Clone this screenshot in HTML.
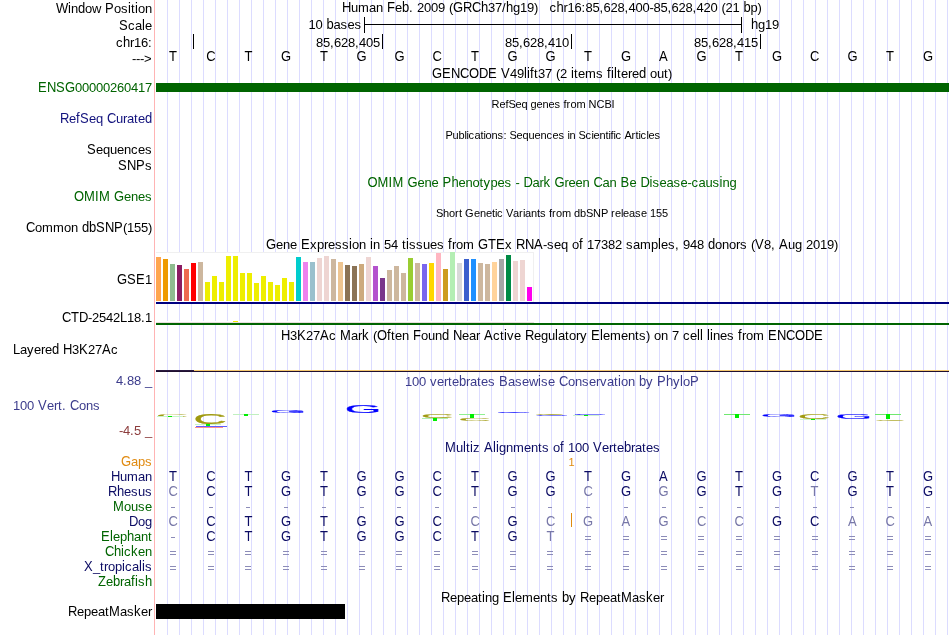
<!DOCTYPE html>
<html><head><meta charset="utf-8"><style>
html,body{margin:0;padding:0;background:#fff;}
body{width:950px;height:635px;overflow:hidden;}
svg{display:block;will-change:transform;font-family:"Liberation Sans",sans-serif;}
rect{shape-rendering:crispEdges;}
</style></head><body>
<svg width="950" height="635" viewBox="0 0 950 635">
<rect x="167" y="0" width="1" height="635" fill="#dcdcff"/>
<rect x="179" y="0" width="1" height="635" fill="#dcdcff"/>
<rect x="191" y="0" width="1" height="635" fill="#dcdcff"/>
<rect x="203" y="0" width="1" height="635" fill="#dcdcff"/>
<rect x="215" y="0" width="1" height="635" fill="#dcdcff"/>
<rect x="227" y="0" width="1" height="635" fill="#dcdcff"/>
<rect x="239" y="0" width="1" height="635" fill="#dcdcff"/>
<rect x="251" y="0" width="1" height="635" fill="#dcdcff"/>
<rect x="263" y="0" width="1" height="635" fill="#dcdcff"/>
<rect x="275" y="0" width="1" height="635" fill="#dcdcff"/>
<rect x="287" y="0" width="1" height="635" fill="#dcdcff"/>
<rect x="299" y="0" width="1" height="635" fill="#dcdcff"/>
<rect x="311" y="0" width="1" height="635" fill="#dcdcff"/>
<rect x="323" y="0" width="1" height="635" fill="#dcdcff"/>
<rect x="335" y="0" width="1" height="635" fill="#dcdcff"/>
<rect x="347" y="0" width="1" height="635" fill="#dcdcff"/>
<rect x="359" y="0" width="1" height="635" fill="#dcdcff"/>
<rect x="371" y="0" width="1" height="635" fill="#dcdcff"/>
<rect x="383" y="0" width="1" height="635" fill="#dcdcff"/>
<rect x="395" y="0" width="1" height="635" fill="#dcdcff"/>
<rect x="407" y="0" width="1" height="635" fill="#dcdcff"/>
<rect x="419" y="0" width="1" height="635" fill="#dcdcff"/>
<rect x="431" y="0" width="1" height="635" fill="#dcdcff"/>
<rect x="443" y="0" width="1" height="635" fill="#dcdcff"/>
<rect x="455" y="0" width="1" height="635" fill="#dcdcff"/>
<rect x="467" y="0" width="1" height="635" fill="#dcdcff"/>
<rect x="479" y="0" width="1" height="635" fill="#dcdcff"/>
<rect x="491" y="0" width="1" height="635" fill="#dcdcff"/>
<rect x="503" y="0" width="1" height="635" fill="#dcdcff"/>
<rect x="515" y="0" width="1" height="635" fill="#dcdcff"/>
<rect x="527" y="0" width="1" height="635" fill="#dcdcff"/>
<rect x="539" y="0" width="1" height="635" fill="#dcdcff"/>
<rect x="551" y="0" width="1" height="635" fill="#dcdcff"/>
<rect x="563" y="0" width="1" height="635" fill="#dcdcff"/>
<rect x="575" y="0" width="1" height="635" fill="#dcdcff"/>
<rect x="587" y="0" width="1" height="635" fill="#dcdcff"/>
<rect x="599" y="0" width="1" height="635" fill="#dcdcff"/>
<rect x="611" y="0" width="1" height="635" fill="#dcdcff"/>
<rect x="623" y="0" width="1" height="635" fill="#dcdcff"/>
<rect x="635" y="0" width="1" height="635" fill="#dcdcff"/>
<rect x="647" y="0" width="1" height="635" fill="#dcdcff"/>
<rect x="659" y="0" width="1" height="635" fill="#dcdcff"/>
<rect x="671" y="0" width="1" height="635" fill="#dcdcff"/>
<rect x="683" y="0" width="1" height="635" fill="#dcdcff"/>
<rect x="695" y="0" width="1" height="635" fill="#dcdcff"/>
<rect x="707" y="0" width="1" height="635" fill="#dcdcff"/>
<rect x="719" y="0" width="1" height="635" fill="#dcdcff"/>
<rect x="731" y="0" width="1" height="635" fill="#dcdcff"/>
<rect x="743" y="0" width="1" height="635" fill="#dcdcff"/>
<rect x="755" y="0" width="1" height="635" fill="#dcdcff"/>
<rect x="767" y="0" width="1" height="635" fill="#dcdcff"/>
<rect x="779" y="0" width="1" height="635" fill="#dcdcff"/>
<rect x="791" y="0" width="1" height="635" fill="#dcdcff"/>
<rect x="803" y="0" width="1" height="635" fill="#dcdcff"/>
<rect x="815" y="0" width="1" height="635" fill="#dcdcff"/>
<rect x="827" y="0" width="1" height="635" fill="#dcdcff"/>
<rect x="839" y="0" width="1" height="635" fill="#dcdcff"/>
<rect x="851" y="0" width="1" height="635" fill="#dcdcff"/>
<rect x="863" y="0" width="1" height="635" fill="#dcdcff"/>
<rect x="875" y="0" width="1" height="635" fill="#dcdcff"/>
<rect x="887" y="0" width="1" height="635" fill="#dcdcff"/>
<rect x="899" y="0" width="1" height="635" fill="#dcdcff"/>
<rect x="911" y="0" width="1" height="635" fill="#dcdcff"/>
<rect x="923" y="0" width="1" height="635" fill="#dcdcff"/>
<rect x="935" y="0" width="1" height="635" fill="#dcdcff"/>
<rect x="947" y="0" width="1" height="635" fill="#dcdcff"/>
<rect x="154" y="0" width="1" height="635" fill="#ffb4b4"/>
<text transform="translate(0,13) scale(1,1.09)" x="56" y="0" font-size="13" fill="#000">W</text>
<text transform="translate(0,13) scale(1,1.07)" x="68" y="0" font-size="13" fill="#000">i</text>
<text transform="translate(0,13) scale(1,1.03)" x="71" y="0" font-size="13" fill="#000">n</text>
<text transform="translate(0,13) scale(1,1.07)" x="78" y="0" font-size="13" fill="#000">d</text>
<text transform="translate(0,13) scale(1,1.03)" x="85 92" y="0" font-size="13" fill="#000">ow</text>
<text transform="translate(0,13) scale(1,1.09)" x="105" y="0" font-size="13" fill="#000">P</text>
<text transform="translate(0,13) scale(1,1.03)" x="114 121" y="0" font-size="13" fill="#000">os</text>
<text transform="translate(0,13) scale(1,1.07)" x="128" y="0" font-size="13" fill="#000">i</text>
<text transform="translate(0,13) scale(1,1.03)" x="131" y="0" font-size="13" fill="#000">t</text>
<text transform="translate(0,13) scale(1,1.07)" x="135" y="0" font-size="13" fill="#000">i</text>
<text transform="translate(0,13) scale(1,1.03)" x="138 145" y="0" font-size="13" fill="#000">on</text>
<text transform="translate(0,30) scale(1,1.09)" x="119" y="0" font-size="13" fill="#000">S</text>
<text transform="translate(0,30) scale(1,1.03)" x="128 135" y="0" font-size="13" fill="#000">ca</text>
<text transform="translate(0,30) scale(1,1.07)" x="142" y="0" font-size="13" fill="#000">l</text>
<text transform="translate(0,30) scale(1,1.03)" x="145" y="0" font-size="13" fill="#000">e</text>
<text transform="translate(0,47) scale(1,1.03)" x="116" y="0" font-size="13" fill="#000">c</text>
<text transform="translate(0,47) scale(1,1.07)" x="123" y="0" font-size="13" fill="#000">h</text>
<text transform="translate(0,47) scale(1,1.03)" x="130 134 141 148" y="0" font-size="13" fill="#000">r16:</text>
<text transform="translate(0,63) scale(1,1.03)" x="132 136 140 144" y="0" font-size="13" fill="#000">---&gt;</text>
<text transform="translate(0,92) scale(1,1.09)" x="38 47 56 65" y="0" font-size="13" fill="#006400">ENSG</text>
<text transform="translate(0,92) scale(1,1.03)" x="75 82 89 96 103 110 117 124 131 138 145" y="0" font-size="13" fill="#006400">00000260417</text>
<text transform="translate(0,123) scale(1,1.09)" x="60" y="0" font-size="13" fill="#12127d">R</text>
<text transform="translate(0,123) scale(1,1.03)" x="69" y="0" font-size="13" fill="#12127d">e</text>
<text transform="translate(0,123) scale(1,1.07)" x="76" y="0" font-size="13" fill="#12127d">f</text>
<text transform="translate(0,123) scale(1,1.09)" x="80" y="0" font-size="13" fill="#12127d">S</text>
<text transform="translate(0,123) scale(1,1.03)" x="89 96" y="0" font-size="13" fill="#12127d">eq</text>
<text transform="translate(0,123) scale(1,1.09)" x="107" y="0" font-size="13" fill="#12127d">C</text>
<text transform="translate(0,123) scale(1,1.03)" x="116 123 127 134 138" y="0" font-size="13" fill="#12127d">urate</text>
<text transform="translate(0,123) scale(1,1.07)" x="145" y="0" font-size="13" fill="#12127d">d</text>
<text transform="translate(0,154) scale(1,1.09)" x="87" y="0" font-size="13" fill="#000">S</text>
<text transform="translate(0,154) scale(1,1.03)" x="96 103 110 117 124 131 138 145" y="0" font-size="13" fill="#000">equences</text>
<text transform="translate(0,170) scale(1,1.09)" x="118 127 136" y="0" font-size="13" fill="#000">SNP</text>
<text transform="translate(0,170) scale(1,1.03)" x="145" y="0" font-size="13" fill="#000">s</text>
<text transform="translate(0,201) scale(1,1.09)" x="74 84 95 99 114" y="0" font-size="13" fill="#006400">OMIMG</text>
<text transform="translate(0,201) scale(1,1.03)" x="124 131 138 145" y="0" font-size="13" fill="#006400">enes</text>
<text transform="translate(0,232) scale(1,1.09)" x="26" y="0" font-size="13" fill="#000">C</text>
<text transform="translate(0,232) scale(1,1.03)" x="35 42 53 64 71" y="0" font-size="13" fill="#000">ommon</text>
<text transform="translate(0,232) scale(1,1.07)" x="82 89" y="0" font-size="13" fill="#000">db</text>
<text transform="translate(0,232) scale(1,1.09)" x="96 105 114" y="0" font-size="13" fill="#000">SNP</text>
<text transform="translate(0,232) scale(1,1.03)" x="123 127 134 141 148" y="0" font-size="13" fill="#000">(155)</text>
<text transform="translate(0,284) scale(1,1.09)" x="117 127 136" y="0" font-size="13" fill="#000">GSE</text>
<text transform="translate(0,284) scale(1,1.03)" x="145" y="0" font-size="13" fill="#000">1</text>
<text transform="translate(0,322) scale(1,1.09)" x="62 71 79" y="0" font-size="13" fill="#000">CTD</text>
<text transform="translate(0,322) scale(1,1.03)" x="88 92 99 106 113" y="0" font-size="13" fill="#000">-2542</text>
<text transform="translate(0,322) scale(1,1.09)" x="120" y="0" font-size="13" fill="#000">L</text>
<text transform="translate(0,322) scale(1,1.03)" x="127 134 141 145" y="0" font-size="13" fill="#000">18.1</text>
<text transform="translate(0,353.5) scale(1,1.09)" x="13" y="0" font-size="13" fill="#000">L</text>
<text transform="translate(0,353.5) scale(1,1.03)" x="20 27 34 41 45" y="0" font-size="13" fill="#000">ayere</text>
<text transform="translate(0,353.5) scale(1,1.07)" x="52" y="0" font-size="13" fill="#000">d</text>
<text transform="translate(0,353.5) scale(1,1.09)" x="63" y="0" font-size="13" fill="#000">H</text>
<text transform="translate(0,353.5) scale(1,1.03)" x="72" y="0" font-size="13" fill="#000">3</text>
<text transform="translate(0,353.5) scale(1,1.09)" x="79" y="0" font-size="13" fill="#000">K</text>
<text transform="translate(0,353.5) scale(1,1.03)" x="88 95" y="0" font-size="13" fill="#000">27</text>
<text transform="translate(0,353.5) scale(1,1.09)" x="102" y="0" font-size="13" fill="#000">A</text>
<text transform="translate(0,353.5) scale(1,1.03)" x="111" y="0" font-size="13" fill="#000">c</text>
<text transform="translate(0,385) scale(1,1.03)" x="116 123 127 134 145" y="0" font-size="13" fill="#3c3c8c">4.88_</text>
<text transform="translate(0,410) scale(1,1.03)" x="13 20 27" y="0" font-size="13" fill="#3c3c8c">100</text>
<text transform="translate(0,410) scale(1,1.09)" x="38" y="0" font-size="13" fill="#3c3c8c">V</text>
<text transform="translate(0,410) scale(1,1.03)" x="47 54 58 62" y="0" font-size="13" fill="#3c3c8c">ert.</text>
<text transform="translate(0,410) scale(1,1.09)" x="70" y="0" font-size="13" fill="#3c3c8c">C</text>
<text transform="translate(0,410) scale(1,1.03)" x="79 86 93" y="0" font-size="13" fill="#3c3c8c">ons</text>
<text transform="translate(0,435) scale(1,1.03)" x="119 123 130 134 145" y="0" font-size="13" fill="#8c3c3c">-4.5_</text>
<text transform="translate(0,466) scale(1,1.09)" x="121" y="0" font-size="13" fill="#e08a10">G</text>
<text transform="translate(0,466) scale(1,1.03)" x="131 138 145" y="0" font-size="13" fill="#e08a10">aps</text>
<text transform="translate(0,481) scale(1,1.09)" x="111" y="0" font-size="13" fill="#0c0c64">H</text>
<text transform="translate(0,481) scale(1,1.03)" x="120 127 138 145" y="0" font-size="13" fill="#0c0c64">uman</text>
<text transform="translate(0,496) scale(1,1.09)" x="108" y="0" font-size="13" fill="#0c0c64">R</text>
<text transform="translate(0,496) scale(1,1.07)" x="117" y="0" font-size="13" fill="#0c0c64">h</text>
<text transform="translate(0,496) scale(1,1.03)" x="124 131 138 145" y="0" font-size="13" fill="#0c0c64">esus</text>
<text transform="translate(0,511) scale(1,1.09)" x="113" y="0" font-size="13" fill="#006400">M</text>
<text transform="translate(0,511) scale(1,1.03)" x="124 131 138 145" y="0" font-size="13" fill="#006400">ouse</text>
<text transform="translate(0,526) scale(1,1.09)" x="129" y="0" font-size="13" fill="#0c0c64">D</text>
<text transform="translate(0,526) scale(1,1.03)" x="138 145" y="0" font-size="13" fill="#0c0c64">og</text>
<text transform="translate(0,541) scale(1,1.09)" x="101" y="0" font-size="13" fill="#006400">E</text>
<text transform="translate(0,541) scale(1,1.07)" x="110" y="0" font-size="13" fill="#006400">l</text>
<text transform="translate(0,541) scale(1,1.03)" x="113 120" y="0" font-size="13" fill="#006400">ep</text>
<text transform="translate(0,541) scale(1,1.07)" x="127" y="0" font-size="13" fill="#006400">h</text>
<text transform="translate(0,541) scale(1,1.03)" x="134 141 148" y="0" font-size="13" fill="#006400">ant</text>
<text transform="translate(0,556) scale(1,1.09)" x="105" y="0" font-size="13" fill="#006400">C</text>
<text transform="translate(0,556) scale(1,1.07)" x="114 121" y="0" font-size="13" fill="#006400">hi</text>
<text transform="translate(0,556) scale(1,1.03)" x="124" y="0" font-size="13" fill="#006400">c</text>
<text transform="translate(0,556) scale(1,1.07)" x="131" y="0" font-size="13" fill="#006400">k</text>
<text transform="translate(0,556) scale(1,1.03)" x="138 145" y="0" font-size="13" fill="#006400">en</text>
<text transform="translate(0,571) scale(1,1.09)" x="84" y="0" font-size="13" fill="#0c0c64">X</text>
<text transform="translate(0,571) scale(1,1.03)" x="93 100 104 108 115" y="0" font-size="13" fill="#0c0c64">_trop</text>
<text transform="translate(0,571) scale(1,1.07)" x="122" y="0" font-size="13" fill="#0c0c64">i</text>
<text transform="translate(0,571) scale(1,1.03)" x="125 132" y="0" font-size="13" fill="#0c0c64">ca</text>
<text transform="translate(0,571) scale(1,1.07)" x="139 142" y="0" font-size="13" fill="#0c0c64">li</text>
<text transform="translate(0,571) scale(1,1.03)" x="145" y="0" font-size="13" fill="#0c0c64">s</text>
<text transform="translate(0,586) scale(1,1.09)" x="98" y="0" font-size="13" fill="#006400">Z</text>
<text transform="translate(0,586) scale(1,1.03)" x="106" y="0" font-size="13" fill="#006400">e</text>
<text transform="translate(0,586) scale(1,1.07)" x="113" y="0" font-size="13" fill="#006400">b</text>
<text transform="translate(0,586) scale(1,1.03)" x="120 124" y="0" font-size="13" fill="#006400">ra</text>
<text transform="translate(0,586) scale(1,1.07)" x="131 135" y="0" font-size="13" fill="#006400">fi</text>
<text transform="translate(0,586) scale(1,1.03)" x="138" y="0" font-size="13" fill="#006400">s</text>
<text transform="translate(0,586) scale(1,1.07)" x="145" y="0" font-size="13" fill="#006400">h</text>
<text transform="translate(0,616) scale(1,1.09)" x="68" y="0" font-size="13" fill="#000">R</text>
<text transform="translate(0,616) scale(1,1.03)" x="77 84 91 98 105" y="0" font-size="13" fill="#000">epeat</text>
<text transform="translate(0,616) scale(1,1.09)" x="109" y="0" font-size="13" fill="#000">M</text>
<text transform="translate(0,616) scale(1,1.03)" x="120 127" y="0" font-size="13" fill="#000">as</text>
<text transform="translate(0,616) scale(1,1.07)" x="134" y="0" font-size="13" fill="#000">k</text>
<text transform="translate(0,616) scale(1,1.03)" x="141 148" y="0" font-size="13" fill="#000">er</text>
<text transform="translate(0,12) scale(1,1.09)" x="342" y="0" font-size="13" fill="#000">H</text>
<text transform="translate(0,12) scale(1,1.03)" x="351 358 369 376" y="0" font-size="13" fill="#000">uman</text>
<text transform="translate(0,12) scale(1,1.09)" x="387" y="0" font-size="13" fill="#000">F</text>
<text transform="translate(0,12) scale(1,1.03)" x="395" y="0" font-size="13" fill="#000">e</text>
<text transform="translate(0,12) scale(1,1.07)" x="402" y="0" font-size="13" fill="#000">b</text>
<text transform="translate(0,12) scale(1,1.03)" x="409 417 424 431 438 449" y="0" font-size="13" fill="#000">.2009(</text>
<text transform="translate(0,12) scale(1,1.09)" x="453 463 472" y="0" font-size="13" fill="#000">GRC</text>
<text transform="translate(0,12) scale(1,1.07)" x="481" y="0" font-size="13" fill="#000">h</text>
<text transform="translate(0,12) scale(1,1.03)" x="488 495 502" y="0" font-size="13" fill="#000">37/</text>
<text transform="translate(0,12) scale(1,1.07)" x="506" y="0" font-size="13" fill="#000">h</text>
<text transform="translate(0,12) scale(1,1.03)" x="513 520 527 534" y="0" font-size="13" fill="#000">g19)</text>
<text transform="translate(0,12) scale(1,1.03)" x="549.5" y="0" font-size="13" fill="#000">c</text>
<text transform="translate(0,12) scale(1,1.07)" x="556.5" y="0" font-size="13" fill="#000">h</text>
<text transform="translate(0,12) scale(1,1.03)" x="563.5 567.5 574.5 581.5 585.5 592.5 599.5 603.5 610.5 617.5 624.5 628.5 635.5 642.5 649.5 653.5 660.5 667.5 671.5 678.5 685.5 692.5 696.5 703.5 710.5 721.5 725.5 732.5" y="0" font-size="13" fill="#000">r16:85,628,400-85,628,420(21</text>
<text transform="translate(0,12) scale(1,1.07)" x="743.5" y="0" font-size="13" fill="#000">b</text>
<text transform="translate(0,12) scale(1,1.03)" x="750.5 757.5" y="0" font-size="13" fill="#000">p)</text>
<text transform="translate(0,29) scale(1,1.03)" x="308.5 315.5" y="0" font-size="13" fill="#000">10</text>
<text transform="translate(0,29) scale(1,1.07)" x="326.5" y="0" font-size="13" fill="#000">b</text>
<text transform="translate(0,29) scale(1,1.03)" x="333.5 340.5 347.5 354.5" y="0" font-size="13" fill="#000">ases</text>
<rect x="364" y="17" width="1" height="16" fill="#000"/>
<rect x="741" y="17" width="1" height="16" fill="#000"/>
<rect x="364" y="24" width="378" height="1" fill="#000"/>
<text transform="translate(0,29) scale(1,1.07)" x="751" y="0" font-size="13" fill="#000">h</text>
<text transform="translate(0,29) scale(1,1.03)" x="758 765 772" y="0" font-size="13" fill="#000">g19</text>
<rect x="382" y="34" width="1" height="15" fill="#000"/>
<text transform="translate(0,47) scale(1,1.03)" x="316 323 330 334 341 348 355 359 366 373" y="0" font-size="13" fill="#000">85,628,405</text>
<rect x="571" y="34" width="1" height="15" fill="#000"/>
<text transform="translate(0,47) scale(1,1.03)" x="505 512 519 523 530 537 544 548 555 562" y="0" font-size="13" fill="#000">85,628,410</text>
<rect x="760" y="34" width="1" height="15" fill="#000"/>
<text transform="translate(0,47) scale(1,1.03)" x="694 701 708 712 719 726 733 737 744 751" y="0" font-size="13" fill="#000">85,628,415</text>
<rect x="193" y="34" width="1" height="15" fill="#000"/>
<text transform="translate(0,61) scale(1,1.09)" x="168.9" y="0" font-size="13" fill="#000">T</text>
<text transform="translate(0,61) scale(1,1.09)" x="206.2" y="0" font-size="13" fill="#000">C</text>
<text transform="translate(0,61) scale(1,1.09)" x="244.4" y="0" font-size="13" fill="#000">T</text>
<text transform="translate(0,61) scale(1,1.09)" x="281.1" y="0" font-size="13" fill="#000">G</text>
<text transform="translate(0,61) scale(1,1.09)" x="319.9" y="0" font-size="13" fill="#000">T</text>
<text transform="translate(0,61) scale(1,1.09)" x="356.6" y="0" font-size="13" fill="#000">G</text>
<text transform="translate(0,61) scale(1,1.09)" x="394.4" y="0" font-size="13" fill="#000">G</text>
<text transform="translate(0,61) scale(1,1.09)" x="432.6" y="0" font-size="13" fill="#000">C</text>
<text transform="translate(0,61) scale(1,1.09)" x="470.9" y="0" font-size="13" fill="#000">T</text>
<text transform="translate(0,61) scale(1,1.09)" x="507.6" y="0" font-size="13" fill="#000">G</text>
<text transform="translate(0,61) scale(1,1.09)" x="545.4" y="0" font-size="13" fill="#000">G</text>
<text transform="translate(0,61) scale(1,1.09)" x="584.1" y="0" font-size="13" fill="#000">T</text>
<text transform="translate(0,61) scale(1,1.09)" x="620.9" y="0" font-size="13" fill="#000">G</text>
<text transform="translate(0,61) scale(1,1.09)" x="659.1" y="0" font-size="13" fill="#000">A</text>
<text transform="translate(0,61) scale(1,1.09)" x="696.4" y="0" font-size="13" fill="#000">G</text>
<text transform="translate(0,61) scale(1,1.09)" x="735.1" y="0" font-size="13" fill="#000">T</text>
<text transform="translate(0,61) scale(1,1.09)" x="771.9" y="0" font-size="13" fill="#000">G</text>
<text transform="translate(0,61) scale(1,1.09)" x="810.1" y="0" font-size="13" fill="#000">C</text>
<text transform="translate(0,61) scale(1,1.09)" x="847.4" y="0" font-size="13" fill="#000">G</text>
<text transform="translate(0,61) scale(1,1.09)" x="886.1" y="0" font-size="13" fill="#000">T</text>
<text transform="translate(0,61) scale(1,1.09)" x="922.9" y="0" font-size="13" fill="#000">G</text>
<text transform="translate(0,78) scale(1,1.09)" x="432 442 451 460 469 479 488 501" y="0" font-size="13" fill="#000">GENCODEV</text>
<text transform="translate(0,78) scale(1,1.03)" x="510 517" y="0" font-size="13" fill="#000">49</text>
<text transform="translate(0,78) scale(1,1.07)" x="524 527 530" y="0" font-size="13" fill="#000">lif</text>
<text transform="translate(0,78) scale(1,1.03)" x="534 538 545 556 560" y="0" font-size="13" fill="#000">t37(2</text>
<text transform="translate(0,78) scale(1,1.07)" x="571" y="0" font-size="13" fill="#000">i</text>
<text transform="translate(0,78) scale(1,1.03)" x="574 578 585 596" y="0" font-size="13" fill="#000">tems</text>
<text transform="translate(0,78) scale(1,1.07)" x="607 611 614" y="0" font-size="13" fill="#000">fil</text>
<text transform="translate(0,78) scale(1,1.03)" x="617 621 628 632" y="0" font-size="13" fill="#000">tere</text>
<text transform="translate(0,78) scale(1,1.07)" x="639" y="0" font-size="13" fill="#000">d</text>
<text transform="translate(0,78) scale(1,1.03)" x="650 657 664 668" y="0" font-size="13" fill="#000">out)</text>
<rect x="156" y="83" width="793" height="9" fill="#006400"/>
<text transform="translate(0,108) scale(1,1.0)" x="491.5 499.5 505.5 508.5 515.5 521.5 530.5 536.5 542.5 548.5 554.5 563.5 566.5 570.5 576.5 588.5 596.5 604.5 611.5" y="0" font-size="11" fill="#000">RefSeqgenesfromNCBI</text>
<text transform="translate(0,139) scale(1,1.0)" x="445.5 452.5 458.5 464.5 466.5 468.5 474.5 480.5 483.5 485.5 491.5 497.5 503.5 509.5 516.5 522.5 528.5 534.5 540.5 546.5 552.5 558.5 567.5 569.5 578.5 585.5 591.5 593.5 599.5 605.5 608.5 610.5 613.5 615.5 624.5 631.5 635.5 638.5 640.5 646.5 648.5 654.5" y="0" font-size="11" fill="#000">Publications:SequencesinScientificArticles</text>
<text transform="translate(0,187) scale(1,1.09)" x="367.5 377.5 388.5 392.5 407.5" y="0" font-size="13" fill="#006400">OMIMG</text>
<text transform="translate(0,187) scale(1,1.03)" x="417.5 424.5 431.5" y="0" font-size="13" fill="#006400">ene</text>
<text transform="translate(0,187) scale(1,1.09)" x="442.5" y="0" font-size="13" fill="#006400">P</text>
<text transform="translate(0,187) scale(1,1.07)" x="451.5" y="0" font-size="13" fill="#006400">h</text>
<text transform="translate(0,187) scale(1,1.03)" x="458.5 465.5 472.5 479.5 483.5 490.5 497.5 504.5 515.5" y="0" font-size="13" fill="#006400">enotypes-</text>
<text transform="translate(0,187) scale(1,1.09)" x="523.5" y="0" font-size="13" fill="#006400">D</text>
<text transform="translate(0,187) scale(1,1.03)" x="532.5 539.5" y="0" font-size="13" fill="#006400">ar</text>
<text transform="translate(0,187) scale(1,1.07)" x="543.5" y="0" font-size="13" fill="#006400">k</text>
<text transform="translate(0,187) scale(1,1.09)" x="554.5" y="0" font-size="13" fill="#006400">G</text>
<text transform="translate(0,187) scale(1,1.03)" x="564.5 568.5 575.5 582.5" y="0" font-size="13" fill="#006400">reen</text>
<text transform="translate(0,187) scale(1,1.09)" x="593.5" y="0" font-size="13" fill="#006400">C</text>
<text transform="translate(0,187) scale(1,1.03)" x="602.5 609.5" y="0" font-size="13" fill="#006400">an</text>
<text transform="translate(0,187) scale(1,1.09)" x="620.5" y="0" font-size="13" fill="#006400">B</text>
<text transform="translate(0,187) scale(1,1.03)" x="629.5" y="0" font-size="13" fill="#006400">e</text>
<text transform="translate(0,187) scale(1,1.09)" x="640.5" y="0" font-size="13" fill="#006400">D</text>
<text transform="translate(0,187) scale(1,1.07)" x="649.5" y="0" font-size="13" fill="#006400">i</text>
<text transform="translate(0,187) scale(1,1.03)" x="652.5 659.5 666.5 673.5 680.5 687.5 691.5 698.5 705.5 712.5" y="0" font-size="13" fill="#006400">sease-caus</text>
<text transform="translate(0,187) scale(1,1.07)" x="719.5" y="0" font-size="13" fill="#006400">i</text>
<text transform="translate(0,187) scale(1,1.03)" x="722.5 729.5" y="0" font-size="13" fill="#006400">ng</text>
<text transform="translate(0,217) scale(1,1.0)" x="436 443 449 455 459 465 474 480 486 492 495 497 506 513 519 523 525 531 537 540 549 552 556 562 574 580 586 593 601 611 615 621 623 629 635 641 650 656 662" y="0" font-size="11" fill="#000">ShortGeneticVariantsfromdbSNPrelease155</text>
<text transform="translate(0,249) scale(1,1.09)" x="266" y="0" font-size="13" fill="#000">G</text>
<text transform="translate(0,249) scale(1,1.03)" x="276 283 290" y="0" font-size="13" fill="#000">ene</text>
<text transform="translate(0,249) scale(1,1.09)" x="301" y="0" font-size="13" fill="#000">E</text>
<text transform="translate(0,249) scale(1,1.03)" x="310 317 324 328 335 342" y="0" font-size="13" fill="#000">xpress</text>
<text transform="translate(0,249) scale(1,1.07)" x="349" y="0" font-size="13" fill="#000">i</text>
<text transform="translate(0,249) scale(1,1.03)" x="352 359" y="0" font-size="13" fill="#000">on</text>
<text transform="translate(0,249) scale(1,1.07)" x="370" y="0" font-size="13" fill="#000">i</text>
<text transform="translate(0,249) scale(1,1.03)" x="373 384 391 402" y="0" font-size="13" fill="#000">n54t</text>
<text transform="translate(0,249) scale(1,1.07)" x="406" y="0" font-size="13" fill="#000">i</text>
<text transform="translate(0,249) scale(1,1.03)" x="409 416 423 430 437" y="0" font-size="13" fill="#000">ssues</text>
<text transform="translate(0,249) scale(1,1.07)" x="448" y="0" font-size="13" fill="#000">f</text>
<text transform="translate(0,249) scale(1,1.03)" x="452 456 463" y="0" font-size="13" fill="#000">rom</text>
<text transform="translate(0,249) scale(1,1.09)" x="478 488 496" y="0" font-size="13" fill="#000">GTE</text>
<text transform="translate(0,249) scale(1,1.03)" x="505" y="0" font-size="13" fill="#000">x</text>
<text transform="translate(0,249) scale(1,1.09)" x="516 525 534" y="0" font-size="13" fill="#000">RNA</text>
<text transform="translate(0,249) scale(1,1.03)" x="543 547 554 561 572" y="0" font-size="13" fill="#000">-seqo</text>
<text transform="translate(0,249) scale(1,1.07)" x="579" y="0" font-size="13" fill="#000">f</text>
<text transform="translate(0,249) scale(1,1.03)" x="587 594 601 608 615 626 633 640 651" y="0" font-size="13" fill="#000">17382samp</text>
<text transform="translate(0,249) scale(1,1.07)" x="658" y="0" font-size="13" fill="#000">l</text>
<text transform="translate(0,249) scale(1,1.03)" x="661 668 675 683 690 697" y="0" font-size="13" fill="#000">es,948</text>
<text transform="translate(0,249) scale(1,1.07)" x="708" y="0" font-size="13" fill="#000">d</text>
<text transform="translate(0,249) scale(1,1.03)" x="715 722 729 736 740 751" y="0" font-size="13" fill="#000">onors(</text>
<text transform="translate(0,249) scale(1,1.09)" x="755" y="0" font-size="13" fill="#000">V</text>
<text transform="translate(0,249) scale(1,1.03)" x="764 771" y="0" font-size="13" fill="#000">8,</text>
<text transform="translate(0,249) scale(1,1.09)" x="779" y="0" font-size="13" fill="#000">A</text>
<text transform="translate(0,249) scale(1,1.03)" x="788 795 806 813 820 827 834" y="0" font-size="13" fill="#000">ug2019)</text>
<rect x="156" y="252" width="378" height="50" fill="#ffffff"/>
<rect x="156" y="252" width="378" height="1" fill="#f0f0f0"/>
<rect x="533" y="252" width="1" height="50" fill="#f0f0f0"/>
<rect x="156" y="257" width="5" height="44" fill="#FFA54F"/>
<rect x="163" y="259" width="5" height="42" fill="#EE9A00"/>
<rect x="170" y="264" width="5" height="37" fill="#8FBC8F"/>
<rect x="177" y="265" width="5" height="36" fill="#8B1C62"/>
<rect x="184" y="269" width="5" height="32" fill="#EE6A50"/>
<rect x="191" y="263" width="5" height="38" fill="#FF0000"/>
<rect x="198" y="262" width="5" height="39" fill="#CDB79E"/>
<rect x="205" y="282" width="5" height="19" fill="#EEEE00"/>
<rect x="212" y="276" width="5" height="25" fill="#EEEE00"/>
<rect x="219" y="282" width="5" height="19" fill="#EEEE00"/>
<rect x="226" y="256" width="5" height="45" fill="#EEEE00"/>
<rect x="233" y="256" width="5" height="45" fill="#EEEE00"/>
<rect x="240" y="273" width="5" height="28" fill="#EEEE00"/>
<rect x="247" y="273" width="5" height="28" fill="#EEEE00"/>
<rect x="254" y="283" width="5" height="18" fill="#EEEE00"/>
<rect x="261" y="276" width="5" height="25" fill="#EEEE00"/>
<rect x="268" y="282" width="5" height="19" fill="#EEEE00"/>
<rect x="275" y="285" width="5" height="16" fill="#EEEE00"/>
<rect x="282" y="278" width="5" height="23" fill="#EEEE00"/>
<rect x="289" y="282" width="5" height="19" fill="#EEEE00"/>
<rect x="296" y="257" width="5" height="44" fill="#00CDCD"/>
<rect x="303" y="262" width="5" height="39" fill="#EE82EE"/>
<rect x="310" y="262" width="5" height="39" fill="#9AC0CD"/>
<rect x="317" y="258" width="5" height="43" fill="#EED5D2"/>
<rect x="324" y="256" width="5" height="45" fill="#EED5D2"/>
<rect x="331" y="259" width="5" height="42" fill="#CDB79E"/>
<rect x="338" y="262" width="5" height="39" fill="#EEC591"/>
<rect x="345" y="265" width="5" height="36" fill="#8B7355"/>
<rect x="352" y="266" width="5" height="35" fill="#8B7355"/>
<rect x="359" y="264" width="5" height="37" fill="#CDAA7D"/>
<rect x="366" y="257" width="5" height="44" fill="#EED5D2"/>
<rect x="373" y="266" width="5" height="35" fill="#B452CD"/>
<rect x="380" y="278" width="5" height="23" fill="#7A378B"/>
<rect x="387" y="270" width="5" height="31" fill="#CDB79E"/>
<rect x="394" y="266" width="5" height="35" fill="#CDB79E"/>
<rect x="401" y="273" width="5" height="28" fill="#CDB79E"/>
<rect x="408" y="258" width="5" height="43" fill="#9ACD32"/>
<rect x="415" y="263" width="5" height="38" fill="#CDB79E"/>
<rect x="422" y="264" width="5" height="37" fill="#7A67EE"/>
<rect x="429" y="263" width="5" height="38" fill="#FFD700"/>
<rect x="436" y="253" width="5" height="48" fill="#FFB6C1"/>
<rect x="443" y="269" width="5" height="32" fill="#CD9B1D"/>
<rect x="450" y="252" width="5" height="49" fill="#B4EEB4"/>
<rect x="457" y="263" width="5" height="38" fill="#D9D9D9"/>
<rect x="464" y="259" width="5" height="42" fill="#3A5FCD"/>
<rect x="471" y="259" width="5" height="42" fill="#1E90FF"/>
<rect x="478" y="263" width="5" height="38" fill="#CDB79E"/>
<rect x="485" y="264" width="5" height="37" fill="#CDB79E"/>
<rect x="492" y="262" width="5" height="39" fill="#FFD39B"/>
<rect x="499" y="259" width="5" height="42" fill="#A6A6A6"/>
<rect x="506" y="255" width="5" height="46" fill="#008B45"/>
<rect x="513" y="261" width="5" height="40" fill="#EED5D2"/>
<rect x="520" y="260" width="5" height="41" fill="#EED5D2"/>
<rect x="527" y="287" width="5" height="14" fill="#FF00EE"/>
<rect x="156" y="302" width="793" height="2" fill="#000080"/>
<rect x="156" y="321" width="378" height="2" fill="#ffffff"/>
<rect x="156" y="322" width="378" height="1" fill="#e8dede"/>
<rect x="233" y="321" width="5" height="1" fill="#EEEE00"/>
<rect x="156" y="323" width="793" height="2" fill="#006400"/>
<text transform="translate(0,340) scale(1,1.09)" x="281" y="0" font-size="13" fill="#000">H</text>
<text transform="translate(0,340) scale(1,1.03)" x="290" y="0" font-size="13" fill="#000">3</text>
<text transform="translate(0,340) scale(1,1.09)" x="297" y="0" font-size="13" fill="#000">K</text>
<text transform="translate(0,340) scale(1,1.03)" x="306 313" y="0" font-size="13" fill="#000">27</text>
<text transform="translate(0,340) scale(1,1.09)" x="320" y="0" font-size="13" fill="#000">A</text>
<text transform="translate(0,340) scale(1,1.03)" x="329" y="0" font-size="13" fill="#000">c</text>
<text transform="translate(0,340) scale(1,1.09)" x="340" y="0" font-size="13" fill="#000">M</text>
<text transform="translate(0,340) scale(1,1.03)" x="351 358" y="0" font-size="13" fill="#000">ar</text>
<text transform="translate(0,340) scale(1,1.07)" x="362" y="0" font-size="13" fill="#000">k</text>
<text transform="translate(0,340) scale(1,1.03)" x="373" y="0" font-size="13" fill="#000">(</text>
<text transform="translate(0,340) scale(1,1.09)" x="377" y="0" font-size="13" fill="#000">O</text>
<text transform="translate(0,340) scale(1,1.07)" x="387" y="0" font-size="13" fill="#000">f</text>
<text transform="translate(0,340) scale(1,1.03)" x="391 395 402" y="0" font-size="13" fill="#000">ten</text>
<text transform="translate(0,340) scale(1,1.09)" x="413" y="0" font-size="13" fill="#000">F</text>
<text transform="translate(0,340) scale(1,1.03)" x="421 428 435" y="0" font-size="13" fill="#000">oun</text>
<text transform="translate(0,340) scale(1,1.07)" x="442" y="0" font-size="13" fill="#000">d</text>
<text transform="translate(0,340) scale(1,1.09)" x="453" y="0" font-size="13" fill="#000">N</text>
<text transform="translate(0,340) scale(1,1.03)" x="462 469 476" y="0" font-size="13" fill="#000">ear</text>
<text transform="translate(0,340) scale(1,1.09)" x="484" y="0" font-size="13" fill="#000">A</text>
<text transform="translate(0,340) scale(1,1.03)" x="493 500" y="0" font-size="13" fill="#000">ct</text>
<text transform="translate(0,340) scale(1,1.07)" x="504" y="0" font-size="13" fill="#000">i</text>
<text transform="translate(0,340) scale(1,1.03)" x="507 514" y="0" font-size="13" fill="#000">ve</text>
<text transform="translate(0,340) scale(1,1.09)" x="525" y="0" font-size="13" fill="#000">R</text>
<text transform="translate(0,340) scale(1,1.03)" x="534 541 548" y="0" font-size="13" fill="#000">egu</text>
<text transform="translate(0,340) scale(1,1.07)" x="555" y="0" font-size="13" fill="#000">l</text>
<text transform="translate(0,340) scale(1,1.03)" x="558 565 569 576 580" y="0" font-size="13" fill="#000">atory</text>
<text transform="translate(0,340) scale(1,1.09)" x="591" y="0" font-size="13" fill="#000">E</text>
<text transform="translate(0,340) scale(1,1.07)" x="600" y="0" font-size="13" fill="#000">l</text>
<text transform="translate(0,340) scale(1,1.03)" x="603 610 621 628 635 639 646 654 661 672 683 690" y="0" font-size="13" fill="#000">ements)on7ce</text>
<text transform="translate(0,340) scale(1,1.07)" x="697 700 707 710" y="0" font-size="13" fill="#000">llli</text>
<text transform="translate(0,340) scale(1,1.03)" x="713 720 727" y="0" font-size="13" fill="#000">nes</text>
<text transform="translate(0,340) scale(1,1.07)" x="738" y="0" font-size="13" fill="#000">f</text>
<text transform="translate(0,340) scale(1,1.03)" x="742 746 753" y="0" font-size="13" fill="#000">rom</text>
<text transform="translate(0,340) scale(1,1.09)" x="768 777 786 795 805 814" y="0" font-size="13" fill="#000">ENCODE</text>
<rect x="156" y="370" width="793" height="1" fill="#f5c870"/>
<rect x="156" y="371" width="793" height="1" fill="#201030"/>
<rect x="156" y="370" width="38" height="1" fill="#2a1a40"/>
<text transform="translate(0,386) scale(1,1.03)" x="405 412 419 430 437 444 448 452" y="0" font-size="13" fill="#3c3c8c">100verte</text>
<text transform="translate(0,386) scale(1,1.07)" x="459" y="0" font-size="13" fill="#3c3c8c">b</text>
<text transform="translate(0,386) scale(1,1.03)" x="466 470 477 481 488" y="0" font-size="13" fill="#3c3c8c">rates</text>
<text transform="translate(0,386) scale(1,1.09)" x="499" y="0" font-size="13" fill="#3c3c8c">B</text>
<text transform="translate(0,386) scale(1,1.03)" x="508 515 522 529" y="0" font-size="13" fill="#3c3c8c">asew</text>
<text transform="translate(0,386) scale(1,1.07)" x="538" y="0" font-size="13" fill="#3c3c8c">i</text>
<text transform="translate(0,386) scale(1,1.03)" x="541 548" y="0" font-size="13" fill="#3c3c8c">se</text>
<text transform="translate(0,386) scale(1,1.09)" x="559" y="0" font-size="13" fill="#3c3c8c">C</text>
<text transform="translate(0,386) scale(1,1.03)" x="568 575 582 589 596 600 607 614" y="0" font-size="13" fill="#3c3c8c">onservat</text>
<text transform="translate(0,386) scale(1,1.07)" x="618" y="0" font-size="13" fill="#3c3c8c">i</text>
<text transform="translate(0,386) scale(1,1.03)" x="621 628" y="0" font-size="13" fill="#3c3c8c">on</text>
<text transform="translate(0,386) scale(1,1.07)" x="639" y="0" font-size="13" fill="#3c3c8c">b</text>
<text transform="translate(0,386) scale(1,1.03)" x="646" y="0" font-size="13" fill="#3c3c8c">y</text>
<text transform="translate(0,386) scale(1,1.09)" x="657" y="0" font-size="13" fill="#3c3c8c">P</text>
<text transform="translate(0,386) scale(1,1.07)" x="666" y="0" font-size="13" fill="#3c3c8c">h</text>
<text transform="translate(0,386) scale(1,1.03)" x="673" y="0" font-size="13" fill="#3c3c8c">y</text>
<text transform="translate(0,386) scale(1,1.07)" x="680" y="0" font-size="13" fill="#3c3c8c">l</text>
<text transform="translate(0,386) scale(1,1.03)" x="683" y="0" font-size="13" fill="#3c3c8c">o</text>
<text transform="translate(0,386) scale(1,1.09)" x="690" y="0" font-size="13" fill="#3c3c8c">P</text>
<text transform="translate(156.323,416.570) scale(0.22422,0.01554)" x="0" y="0" font-size="200" fill="#a09a10" stroke="#a09a10" stroke-width="0.6" vector-effect="non-scaling-stroke">C</text>
<text transform="translate(193.567,423.963) scale(0.22975,0.06991)" x="0" y="0" font-size="200" fill="#a09a10" stroke="#a09a10" stroke-width="0.6" vector-effect="non-scaling-stroke">C</text>
<text transform="translate(269.827,413.459) scale(0.23590,0.02119)" x="0" y="0" font-size="200" fill="#0000ff" stroke="#0000ff" stroke-width="0.6" vector-effect="non-scaling-stroke">G</text>
<text transform="translate(344.727,413.302) scale(0.23590,0.05014)" x="0" y="0" font-size="200" fill="#0000ff" stroke="#0000ff" stroke-width="0.6" vector-effect="non-scaling-stroke">G</text>
<text transform="translate(420.683,418.345) scale(0.22817,0.02825)" x="0" y="0" font-size="200" fill="#a09a10" stroke="#a09a10" stroke-width="0.6" vector-effect="non-scaling-stroke">C</text>
<text transform="translate(458.607,421.260) scale(0.22580,0.02048)" x="0" y="0" font-size="200" fill="#a09a10" stroke="#a09a10" stroke-width="0.6" vector-effect="non-scaling-stroke">C</text>
<text transform="translate(496.266,413.081) scale(0.23207,0.00989)" x="0" y="0" font-size="200" fill="#0000ff" stroke="#0000ff" stroke-width="0.6" vector-effect="non-scaling-stroke">G</text>
<text transform="translate(534.467,415.385) scale(0.21001,0.00777)" x="0" y="0" font-size="200" fill="#a09a10" stroke="#a09a10" stroke-width="0.6" vector-effect="non-scaling-stroke">C</text>
<text transform="translate(534.297,416.386) scale(0.22900,0.00706)" x="0" y="0" font-size="200" fill="#0000ff" stroke="#0000ff" stroke-width="0.6" vector-effect="non-scaling-stroke">G</text>
<text transform="translate(572.735,415.385) scale(0.22517,0.00777)" x="0" y="0" font-size="200" fill="#0000ff" stroke="#0000ff" stroke-width="0.6" vector-effect="non-scaling-stroke">G</text>
<text transform="translate(760.612,416.667) scale(0.23743,0.01695)" x="0" y="0" font-size="200" fill="#0000ff" stroke="#0000ff" stroke-width="0.6" vector-effect="non-scaling-stroke">G</text>
<text transform="translate(797.699,419.330) scale(0.22659,0.03602)" x="0" y="0" font-size="200" fill="#a09a10" stroke="#a09a10" stroke-width="0.6" vector-effect="non-scaling-stroke">C</text>
<text transform="translate(835.612,419.330) scale(0.23743,0.03602)" x="0" y="0" font-size="200" fill="#0000ff" stroke="#0000ff" stroke-width="0.6" vector-effect="non-scaling-stroke">G</text>
<text transform="translate(874.603,420.682) scale(0.21633,0.00918)" x="0" y="0" font-size="200" fill="#a09a10" stroke="#a09a10" stroke-width="0.6" vector-effect="non-scaling-stroke">C</text>
<rect x="157" y="416" width="26" height="1" fill="#c8f5c8"/>
<rect x="195" y="424" width="26" height="1" fill="#c8f5c8"/>
<rect x="233" y="414" width="26" height="1" fill="#c0f0c0"/>
<rect x="422" y="418" width="26" height="1" fill="#b0f0b0"/>
<rect x="459" y="414" width="26" height="1" fill="#90f090"/>
<rect x="573" y="415" width="26" height="1" fill="#d0f5d0"/>
<rect x="724" y="414" width="26" height="1" fill="#70e870"/>
<rect x="800" y="419" width="26" height="1" fill="#d0f5d0"/>
<rect x="875" y="414" width="26" height="1" fill="#70e870"/>
<rect x="168" y="416" width="4" height="1" fill="#00ee00"/>
<rect x="206" y="424" width="4" height="2" fill="#00ee00"/>
<rect x="244" y="414" width="4" height="2" fill="#00ee00"/>
<rect x="433" y="418" width="4" height="3" fill="#00ee00"/>
<rect x="470" y="414" width="4" height="4" fill="#00ee00"/>
<rect x="584" y="415" width="4" height="1" fill="#00ee00"/>
<rect x="735" y="414" width="4" height="4" fill="#00ee00"/>
<rect x="811" y="419" width="4" height="1" fill="#00ee00"/>
<rect x="886" y="414" width="4" height="5" fill="#00ee00"/>
<rect x="196" y="426" width="31" height="1" fill="#6060ff"/>
<rect x="195" y="427" width="28" height="1" fill="#ff9090"/>
<text transform="translate(0,452) scale(1,1.09)" x="445" y="0" font-size="13" fill="#0c0c64">M</text>
<text transform="translate(0,452) scale(1,1.03)" x="456" y="0" font-size="13" fill="#0c0c64">u</text>
<text transform="translate(0,452) scale(1,1.07)" x="463" y="0" font-size="13" fill="#0c0c64">l</text>
<text transform="translate(0,452) scale(1,1.03)" x="466" y="0" font-size="13" fill="#0c0c64">t</text>
<text transform="translate(0,452) scale(1,1.07)" x="470" y="0" font-size="13" fill="#0c0c64">i</text>
<text transform="translate(0,452) scale(1,1.03)" x="473" y="0" font-size="13" fill="#0c0c64">z</text>
<text transform="translate(0,452) scale(1,1.09)" x="484" y="0" font-size="13" fill="#0c0c64">A</text>
<text transform="translate(0,452) scale(1,1.07)" x="493 496" y="0" font-size="13" fill="#0c0c64">li</text>
<text transform="translate(0,452) scale(1,1.03)" x="499 506 513 524 531 538 542 553" y="0" font-size="13" fill="#0c0c64">gnmentso</text>
<text transform="translate(0,452) scale(1,1.07)" x="560" y="0" font-size="13" fill="#0c0c64">f</text>
<text transform="translate(0,452) scale(1,1.03)" x="568 575 582" y="0" font-size="13" fill="#0c0c64">100</text>
<text transform="translate(0,452) scale(1,1.09)" x="593" y="0" font-size="13" fill="#0c0c64">V</text>
<text transform="translate(0,452) scale(1,1.03)" x="602 609 613 617" y="0" font-size="13" fill="#0c0c64">erte</text>
<text transform="translate(0,452) scale(1,1.07)" x="624" y="0" font-size="13" fill="#0c0c64">b</text>
<text transform="translate(0,452) scale(1,1.03)" x="631 635 642 646 653" y="0" font-size="13" fill="#0c0c64">rates</text>
<text transform="translate(0,466) scale(1,1.0)" x="568.5" y="0" font-size="11" fill="#e08a10">1</text>
<rect x="571" y="513" width="1" height="14" fill="#e08a10"/>
<text transform="translate(0,481) scale(1,1.09)" x="168.9" y="0" font-size="13" fill="#0c0c64">T</text>
<text transform="translate(0,481) scale(1,1.09)" x="206.2" y="0" font-size="13" fill="#0c0c64">C</text>
<text transform="translate(0,481) scale(1,1.09)" x="244.4" y="0" font-size="13" fill="#0c0c64">T</text>
<text transform="translate(0,481) scale(1,1.09)" x="281.1" y="0" font-size="13" fill="#0c0c64">G</text>
<text transform="translate(0,481) scale(1,1.09)" x="319.9" y="0" font-size="13" fill="#0c0c64">T</text>
<text transform="translate(0,481) scale(1,1.09)" x="356.6" y="0" font-size="13" fill="#0c0c64">G</text>
<text transform="translate(0,481) scale(1,1.09)" x="394.4" y="0" font-size="13" fill="#0c0c64">G</text>
<text transform="translate(0,481) scale(1,1.09)" x="432.6" y="0" font-size="13" fill="#0c0c64">C</text>
<text transform="translate(0,481) scale(1,1.09)" x="470.9" y="0" font-size="13" fill="#0c0c64">T</text>
<text transform="translate(0,481) scale(1,1.09)" x="507.6" y="0" font-size="13" fill="#0c0c64">G</text>
<text transform="translate(0,481) scale(1,1.09)" x="545.4" y="0" font-size="13" fill="#0c0c64">G</text>
<text transform="translate(0,481) scale(1,1.09)" x="584.1" y="0" font-size="13" fill="#0c0c64">T</text>
<text transform="translate(0,481) scale(1,1.09)" x="620.9" y="0" font-size="13" fill="#0c0c64">G</text>
<text transform="translate(0,481) scale(1,1.09)" x="659.1" y="0" font-size="13" fill="#0c0c64">A</text>
<text transform="translate(0,481) scale(1,1.09)" x="696.4" y="0" font-size="13" fill="#0c0c64">G</text>
<text transform="translate(0,481) scale(1,1.09)" x="735.1" y="0" font-size="13" fill="#0c0c64">T</text>
<text transform="translate(0,481) scale(1,1.09)" x="771.9" y="0" font-size="13" fill="#0c0c64">G</text>
<text transform="translate(0,481) scale(1,1.09)" x="810.1" y="0" font-size="13" fill="#0c0c64">C</text>
<text transform="translate(0,481) scale(1,1.09)" x="847.4" y="0" font-size="13" fill="#0c0c64">G</text>
<text transform="translate(0,481) scale(1,1.09)" x="886.1" y="0" font-size="13" fill="#0c0c64">T</text>
<text transform="translate(0,481) scale(1,1.09)" x="922.9" y="0" font-size="13" fill="#0c0c64">G</text>
<text transform="translate(0,496) scale(1,1.09)" x="168.4" y="0" font-size="13" fill="#7878a8">C</text>
<text transform="translate(0,496) scale(1,1.09)" x="206.2" y="0" font-size="13" fill="#0c0c64">C</text>
<text transform="translate(0,496) scale(1,1.09)" x="244.4" y="0" font-size="13" fill="#0c0c64">T</text>
<text transform="translate(0,496) scale(1,1.09)" x="281.1" y="0" font-size="13" fill="#0c0c64">G</text>
<text transform="translate(0,496) scale(1,1.09)" x="319.9" y="0" font-size="13" fill="#0c0c64">T</text>
<text transform="translate(0,496) scale(1,1.09)" x="356.6" y="0" font-size="13" fill="#0c0c64">G</text>
<text transform="translate(0,496) scale(1,1.09)" x="394.4" y="0" font-size="13" fill="#0c0c64">G</text>
<text transform="translate(0,496) scale(1,1.09)" x="432.6" y="0" font-size="13" fill="#0c0c64">C</text>
<text transform="translate(0,496) scale(1,1.09)" x="470.9" y="0" font-size="13" fill="#0c0c64">T</text>
<text transform="translate(0,496) scale(1,1.09)" x="507.6" y="0" font-size="13" fill="#0c0c64">G</text>
<text transform="translate(0,496) scale(1,1.09)" x="545.4" y="0" font-size="13" fill="#0c0c64">G</text>
<text transform="translate(0,496) scale(1,1.09)" x="583.6" y="0" font-size="13" fill="#7878a8">C</text>
<text transform="translate(0,496) scale(1,1.09)" x="620.9" y="0" font-size="13" fill="#0c0c64">G</text>
<text transform="translate(0,496) scale(1,1.09)" x="658.6" y="0" font-size="13" fill="#7878a8">G</text>
<text transform="translate(0,496) scale(1,1.09)" x="696.4" y="0" font-size="13" fill="#0c0c64">G</text>
<text transform="translate(0,496) scale(1,1.09)" x="735.1" y="0" font-size="13" fill="#0c0c64">T</text>
<text transform="translate(0,496) scale(1,1.09)" x="771.9" y="0" font-size="13" fill="#0c0c64">G</text>
<text transform="translate(0,496) scale(1,1.09)" x="810.6" y="0" font-size="13" fill="#7878a8">T</text>
<text transform="translate(0,496) scale(1,1.09)" x="847.4" y="0" font-size="13" fill="#0c0c64">G</text>
<text transform="translate(0,496) scale(1,1.09)" x="886.1" y="0" font-size="13" fill="#0c0c64">T</text>
<text transform="translate(0,496) scale(1,1.09)" x="922.9" y="0" font-size="13" fill="#0c0c64">G</text>
<rect x="171" y="507" width="4" height="1" fill="#8c8cb8"/>
<rect x="209" y="507" width="4" height="1" fill="#8c8cb8"/>
<rect x="246" y="507" width="4" height="1" fill="#8c8cb8"/>
<rect x="284" y="507" width="4" height="1" fill="#8c8cb8"/>
<rect x="322" y="507" width="4" height="1" fill="#8c8cb8"/>
<rect x="360" y="507" width="4" height="1" fill="#8c8cb8"/>
<rect x="397" y="507" width="4" height="1" fill="#8c8cb8"/>
<rect x="435" y="507" width="4" height="1" fill="#8c8cb8"/>
<rect x="473" y="507" width="4" height="1" fill="#8c8cb8"/>
<rect x="511" y="507" width="4" height="1" fill="#8c8cb8"/>
<rect x="548" y="507" width="4" height="1" fill="#8c8cb8"/>
<rect x="586" y="507" width="4" height="1" fill="#8c8cb8"/>
<rect x="624" y="507" width="4" height="1" fill="#8c8cb8"/>
<rect x="662" y="507" width="4" height="1" fill="#8c8cb8"/>
<rect x="699" y="507" width="4" height="1" fill="#8c8cb8"/>
<rect x="737" y="507" width="4" height="1" fill="#8c8cb8"/>
<rect x="775" y="507" width="4" height="1" fill="#8c8cb8"/>
<rect x="813" y="507" width="4" height="1" fill="#8c8cb8"/>
<rect x="850" y="507" width="4" height="1" fill="#8c8cb8"/>
<rect x="888" y="507" width="4" height="1" fill="#8c8cb8"/>
<rect x="926" y="507" width="4" height="1" fill="#8c8cb8"/>
<text transform="translate(0,526) scale(1,1.09)" x="168.4" y="0" font-size="13" fill="#7878a8">C</text>
<text transform="translate(0,526) scale(1,1.09)" x="206.2" y="0" font-size="13" fill="#0c0c64">C</text>
<text transform="translate(0,526) scale(1,1.09)" x="244.4" y="0" font-size="13" fill="#0c0c64">T</text>
<text transform="translate(0,526) scale(1,1.09)" x="281.1" y="0" font-size="13" fill="#0c0c64">G</text>
<text transform="translate(0,526) scale(1,1.09)" x="319.9" y="0" font-size="13" fill="#0c0c64">T</text>
<text transform="translate(0,526) scale(1,1.09)" x="356.6" y="0" font-size="13" fill="#0c0c64">G</text>
<text transform="translate(0,526) scale(1,1.09)" x="394.4" y="0" font-size="13" fill="#0c0c64">G</text>
<text transform="translate(0,526) scale(1,1.09)" x="432.6" y="0" font-size="13" fill="#0c0c64">C</text>
<text transform="translate(0,526) scale(1,1.09)" x="470.4" y="0" font-size="13" fill="#7878a8">C</text>
<text transform="translate(0,526) scale(1,1.09)" x="507.6" y="0" font-size="13" fill="#0c0c64">G</text>
<text transform="translate(0,526) scale(1,1.09)" x="545.9" y="0" font-size="13" fill="#7878a8">C</text>
<text transform="translate(0,526) scale(1,1.09)" x="583.1" y="0" font-size="13" fill="#7878a8">G</text>
<text transform="translate(0,526) scale(1,1.09)" x="621.4" y="0" font-size="13" fill="#7878a8">A</text>
<text transform="translate(0,526) scale(1,1.09)" x="658.6" y="0" font-size="13" fill="#7878a8">G</text>
<text transform="translate(0,526) scale(1,1.09)" x="696.9" y="0" font-size="13" fill="#7878a8">C</text>
<text transform="translate(0,526) scale(1,1.09)" x="734.6" y="0" font-size="13" fill="#7878a8">C</text>
<text transform="translate(0,526) scale(1,1.09)" x="771.9" y="0" font-size="13" fill="#0c0c64">G</text>
<text transform="translate(0,526) scale(1,1.09)" x="810.1" y="0" font-size="13" fill="#0c0c64">C</text>
<text transform="translate(0,526) scale(1,1.09)" x="847.9" y="0" font-size="13" fill="#7878a8">A</text>
<text transform="translate(0,526) scale(1,1.09)" x="885.6" y="0" font-size="13" fill="#7878a8">C</text>
<text transform="translate(0,526) scale(1,1.09)" x="923.4" y="0" font-size="13" fill="#7878a8">A</text>
<rect x="171" y="537" width="4" height="1" fill="#8c8cb8"/>
<text transform="translate(0,541) scale(1,1.09)" x="206.2" y="0" font-size="13" fill="#0c0c64">C</text>
<text transform="translate(0,541) scale(1,1.09)" x="244.4" y="0" font-size="13" fill="#0c0c64">T</text>
<text transform="translate(0,541) scale(1,1.09)" x="281.1" y="0" font-size="13" fill="#0c0c64">G</text>
<text transform="translate(0,541) scale(1,1.09)" x="319.9" y="0" font-size="13" fill="#0c0c64">T</text>
<text transform="translate(0,541) scale(1,1.09)" x="356.6" y="0" font-size="13" fill="#0c0c64">G</text>
<text transform="translate(0,541) scale(1,1.09)" x="394.4" y="0" font-size="13" fill="#0c0c64">G</text>
<text transform="translate(0,541) scale(1,1.09)" x="432.6" y="0" font-size="13" fill="#0c0c64">C</text>
<text transform="translate(0,541) scale(1,1.09)" x="470.9" y="0" font-size="13" fill="#0c0c64">T</text>
<text transform="translate(0,541) scale(1,1.09)" x="507.6" y="0" font-size="13" fill="#0c0c64">G</text>
<text transform="translate(0,541) scale(1,1.09)" x="546.4" y="0" font-size="13" fill="#7878a8">T</text>
<rect x="585" y="536" width="6" height="1" fill="#8c8cb8"/>
<rect x="585" y="539" width="6" height="1" fill="#8c8cb8"/>
<rect x="623" y="536" width="6" height="1" fill="#8c8cb8"/>
<rect x="623" y="539" width="6" height="1" fill="#8c8cb8"/>
<rect x="661" y="536" width="6" height="1" fill="#8c8cb8"/>
<rect x="661" y="539" width="6" height="1" fill="#8c8cb8"/>
<rect x="698" y="536" width="6" height="1" fill="#8c8cb8"/>
<rect x="698" y="539" width="6" height="1" fill="#8c8cb8"/>
<rect x="736" y="536" width="6" height="1" fill="#8c8cb8"/>
<rect x="736" y="539" width="6" height="1" fill="#8c8cb8"/>
<rect x="774" y="536" width="6" height="1" fill="#8c8cb8"/>
<rect x="774" y="539" width="6" height="1" fill="#8c8cb8"/>
<rect x="812" y="536" width="6" height="1" fill="#8c8cb8"/>
<rect x="812" y="539" width="6" height="1" fill="#8c8cb8"/>
<rect x="849" y="536" width="6" height="1" fill="#8c8cb8"/>
<rect x="849" y="539" width="6" height="1" fill="#8c8cb8"/>
<rect x="887" y="536" width="6" height="1" fill="#8c8cb8"/>
<rect x="887" y="539" width="6" height="1" fill="#8c8cb8"/>
<rect x="925" y="536" width="6" height="1" fill="#8c8cb8"/>
<rect x="925" y="539" width="6" height="1" fill="#8c8cb8"/>
<rect x="170" y="551" width="6" height="1" fill="#8c8cb8"/>
<rect x="170" y="554" width="6" height="1" fill="#8c8cb8"/>
<rect x="208" y="551" width="6" height="1" fill="#8c8cb8"/>
<rect x="208" y="554" width="6" height="1" fill="#8c8cb8"/>
<rect x="245" y="551" width="6" height="1" fill="#8c8cb8"/>
<rect x="245" y="554" width="6" height="1" fill="#8c8cb8"/>
<rect x="283" y="551" width="6" height="1" fill="#8c8cb8"/>
<rect x="283" y="554" width="6" height="1" fill="#8c8cb8"/>
<rect x="321" y="551" width="6" height="1" fill="#8c8cb8"/>
<rect x="321" y="554" width="6" height="1" fill="#8c8cb8"/>
<rect x="359" y="551" width="6" height="1" fill="#8c8cb8"/>
<rect x="359" y="554" width="6" height="1" fill="#8c8cb8"/>
<rect x="396" y="551" width="6" height="1" fill="#8c8cb8"/>
<rect x="396" y="554" width="6" height="1" fill="#8c8cb8"/>
<rect x="434" y="551" width="6" height="1" fill="#8c8cb8"/>
<rect x="434" y="554" width="6" height="1" fill="#8c8cb8"/>
<rect x="472" y="551" width="6" height="1" fill="#8c8cb8"/>
<rect x="472" y="554" width="6" height="1" fill="#8c8cb8"/>
<rect x="510" y="551" width="6" height="1" fill="#8c8cb8"/>
<rect x="510" y="554" width="6" height="1" fill="#8c8cb8"/>
<rect x="547" y="551" width="6" height="1" fill="#8c8cb8"/>
<rect x="547" y="554" width="6" height="1" fill="#8c8cb8"/>
<rect x="585" y="551" width="6" height="1" fill="#8c8cb8"/>
<rect x="585" y="554" width="6" height="1" fill="#8c8cb8"/>
<rect x="623" y="551" width="6" height="1" fill="#8c8cb8"/>
<rect x="623" y="554" width="6" height="1" fill="#8c8cb8"/>
<rect x="661" y="551" width="6" height="1" fill="#8c8cb8"/>
<rect x="661" y="554" width="6" height="1" fill="#8c8cb8"/>
<rect x="698" y="551" width="6" height="1" fill="#8c8cb8"/>
<rect x="698" y="554" width="6" height="1" fill="#8c8cb8"/>
<rect x="736" y="551" width="6" height="1" fill="#8c8cb8"/>
<rect x="736" y="554" width="6" height="1" fill="#8c8cb8"/>
<rect x="774" y="551" width="6" height="1" fill="#8c8cb8"/>
<rect x="774" y="554" width="6" height="1" fill="#8c8cb8"/>
<rect x="812" y="551" width="6" height="1" fill="#8c8cb8"/>
<rect x="812" y="554" width="6" height="1" fill="#8c8cb8"/>
<rect x="849" y="551" width="6" height="1" fill="#8c8cb8"/>
<rect x="849" y="554" width="6" height="1" fill="#8c8cb8"/>
<rect x="887" y="551" width="6" height="1" fill="#8c8cb8"/>
<rect x="887" y="554" width="6" height="1" fill="#8c8cb8"/>
<rect x="925" y="551" width="6" height="1" fill="#8c8cb8"/>
<rect x="925" y="554" width="6" height="1" fill="#8c8cb8"/>
<rect x="170" y="566" width="6" height="1" fill="#8c8cb8"/>
<rect x="170" y="569" width="6" height="1" fill="#8c8cb8"/>
<rect x="208" y="566" width="6" height="1" fill="#8c8cb8"/>
<rect x="208" y="569" width="6" height="1" fill="#8c8cb8"/>
<rect x="245" y="566" width="6" height="1" fill="#8c8cb8"/>
<rect x="245" y="569" width="6" height="1" fill="#8c8cb8"/>
<rect x="283" y="566" width="6" height="1" fill="#8c8cb8"/>
<rect x="283" y="569" width="6" height="1" fill="#8c8cb8"/>
<rect x="321" y="566" width="6" height="1" fill="#8c8cb8"/>
<rect x="321" y="569" width="6" height="1" fill="#8c8cb8"/>
<rect x="359" y="566" width="6" height="1" fill="#8c8cb8"/>
<rect x="359" y="569" width="6" height="1" fill="#8c8cb8"/>
<rect x="396" y="566" width="6" height="1" fill="#8c8cb8"/>
<rect x="396" y="569" width="6" height="1" fill="#8c8cb8"/>
<rect x="434" y="566" width="6" height="1" fill="#8c8cb8"/>
<rect x="434" y="569" width="6" height="1" fill="#8c8cb8"/>
<rect x="472" y="566" width="6" height="1" fill="#8c8cb8"/>
<rect x="472" y="569" width="6" height="1" fill="#8c8cb8"/>
<rect x="510" y="566" width="6" height="1" fill="#8c8cb8"/>
<rect x="510" y="569" width="6" height="1" fill="#8c8cb8"/>
<rect x="547" y="566" width="6" height="1" fill="#8c8cb8"/>
<rect x="547" y="569" width="6" height="1" fill="#8c8cb8"/>
<rect x="585" y="566" width="6" height="1" fill="#8c8cb8"/>
<rect x="585" y="569" width="6" height="1" fill="#8c8cb8"/>
<rect x="623" y="566" width="6" height="1" fill="#8c8cb8"/>
<rect x="623" y="569" width="6" height="1" fill="#8c8cb8"/>
<rect x="661" y="566" width="6" height="1" fill="#8c8cb8"/>
<rect x="661" y="569" width="6" height="1" fill="#8c8cb8"/>
<rect x="698" y="566" width="6" height="1" fill="#8c8cb8"/>
<rect x="698" y="569" width="6" height="1" fill="#8c8cb8"/>
<rect x="736" y="566" width="6" height="1" fill="#8c8cb8"/>
<rect x="736" y="569" width="6" height="1" fill="#8c8cb8"/>
<rect x="774" y="566" width="6" height="1" fill="#8c8cb8"/>
<rect x="774" y="569" width="6" height="1" fill="#8c8cb8"/>
<rect x="812" y="566" width="6" height="1" fill="#8c8cb8"/>
<rect x="812" y="569" width="6" height="1" fill="#8c8cb8"/>
<rect x="849" y="566" width="6" height="1" fill="#8c8cb8"/>
<rect x="849" y="569" width="6" height="1" fill="#8c8cb8"/>
<rect x="887" y="566" width="6" height="1" fill="#8c8cb8"/>
<rect x="887" y="569" width="6" height="1" fill="#8c8cb8"/>
<rect x="925" y="566" width="6" height="1" fill="#8c8cb8"/>
<rect x="925" y="569" width="6" height="1" fill="#8c8cb8"/>
<text transform="translate(0,602) scale(1,1.09)" x="441" y="0" font-size="13" fill="#000">R</text>
<text transform="translate(0,602) scale(1,1.03)" x="450 457 464 471 478" y="0" font-size="13" fill="#000">epeat</text>
<text transform="translate(0,602) scale(1,1.07)" x="482" y="0" font-size="13" fill="#000">i</text>
<text transform="translate(0,602) scale(1,1.03)" x="485 492" y="0" font-size="13" fill="#000">ng</text>
<text transform="translate(0,602) scale(1,1.09)" x="503" y="0" font-size="13" fill="#000">E</text>
<text transform="translate(0,602) scale(1,1.07)" x="512" y="0" font-size="13" fill="#000">l</text>
<text transform="translate(0,602) scale(1,1.03)" x="515 522 533 540 547 551" y="0" font-size="13" fill="#000">ements</text>
<text transform="translate(0,602) scale(1,1.07)" x="562" y="0" font-size="13" fill="#000">b</text>
<text transform="translate(0,602) scale(1,1.03)" x="569" y="0" font-size="13" fill="#000">y</text>
<text transform="translate(0,602) scale(1,1.09)" x="580" y="0" font-size="13" fill="#000">R</text>
<text transform="translate(0,602) scale(1,1.03)" x="589 596 603 610 617" y="0" font-size="13" fill="#000">epeat</text>
<text transform="translate(0,602) scale(1,1.09)" x="621" y="0" font-size="13" fill="#000">M</text>
<text transform="translate(0,602) scale(1,1.03)" x="632 639" y="0" font-size="13" fill="#000">as</text>
<text transform="translate(0,602) scale(1,1.07)" x="646" y="0" font-size="13" fill="#000">k</text>
<text transform="translate(0,602) scale(1,1.03)" x="653 660" y="0" font-size="13" fill="#000">er</text>
<rect x="156" y="604" width="189" height="15" fill="#000"/>
</svg></body></html>
